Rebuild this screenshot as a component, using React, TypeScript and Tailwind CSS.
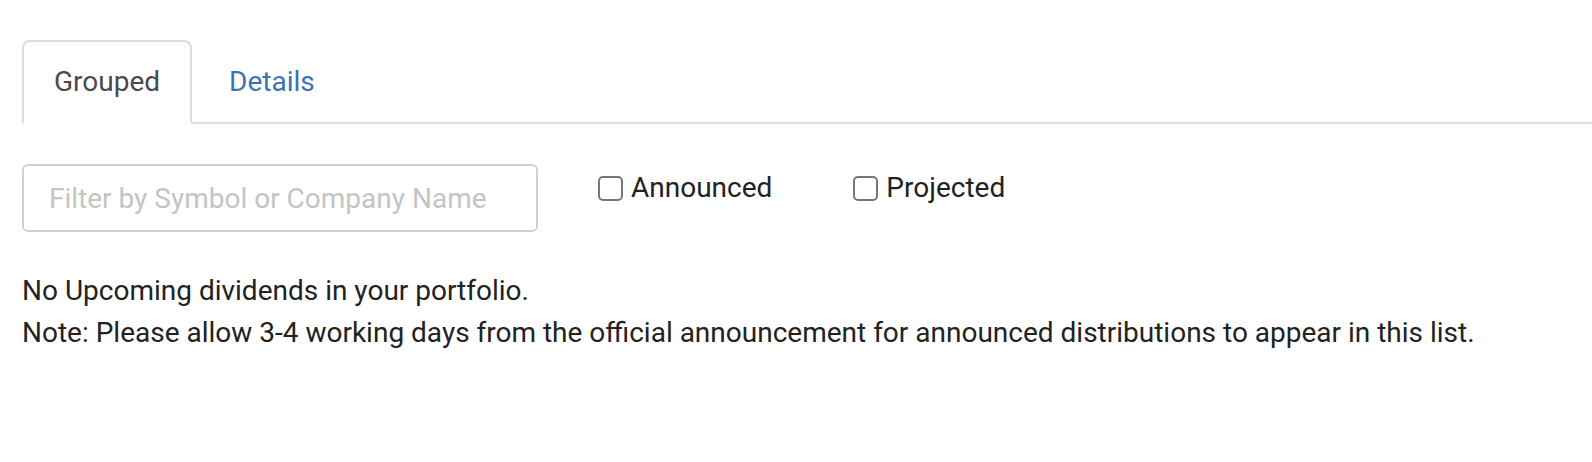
import React, { useState } from 'react';

const tabs = [
  { id: 'grouped', label: 'Grouped' },
  { id: 'details', label: 'Details' },
];

const CheckOption: React.FC<{ label: string; checked: boolean; onChange: () => void; className?: string }> = ({ label, checked, onChange, className }) => (
  <label className={`flex items-center gap-[8px] leading-[42px] text-[#222] cursor-pointer ${className ?? ''}`}>
    <input
      type="checkbox"
      checked={checked}
      onChange={onChange}
      className="appearance-none w-[25px] h-[25px] border-2 border-[#767676] rounded-[5px] bg-white checked:bg-[#0075ff] checked:border-[#0075ff]"
    />
    <span>{label}</span>
  </label>
);

export default function App() {
  const [activeTab, setActiveTab] = useState('grouped');
  const [filter, setFilter] = useState('');
  const [announced, setAnnounced] = useState(false);
  const [projected, setProjected] = useState(false);

  return (
    <div className="min-h-[462px] bg-white pl-[22px] pt-[40px] text-[28px] font-['Roboto',sans-serif]">
      {/* Tabs */}
      <div className="flex border-b-2 border-[#dddddd]">
        {tabs.map(({ id, label }, i) => (
          <button
            key={id}
            onClick={() => setActiveTab(id)}
            className={`-mb-[2px] border-2 rounded-t-[8px] px-[30px] py-[19px] leading-[42px] ${i > 0 ? 'ml-[5px]' : ''} ${
              activeTab === id
                ? 'border-[#dddddd] border-b-white bg-white text-[#4a4a4a]'
                : 'border-transparent text-[#3b72b8] hover:underline'
            }`}
          >
            {label}
          </button>
        ))}
      </div>

      {/* Filters */}
      <div className="flex items-start mt-[40px]">
        <input
          type="text"
          value={filter}
          onChange={(e) => setFilter(e.target.value)}
          placeholder="Filter by Symbol or Company Name"
          className="w-[516px] h-[68px] border-2 border-[#d0d0d0] rounded-[6px] px-[25px] text-[#222] placeholder:text-[#c4c4c4] outline-none"
        />
        <CheckOption label="Announced" checked={announced} onChange={() => setAnnounced(!announced)} className="ml-[60px] mt-[3px]" />
        <CheckOption label="Projected" checked={projected} onChange={() => setProjected(!projected)} className="ml-[81px] mt-[3px]" />
      </div>

      {/* Message */}
      <div className="mt-[38px] leading-[42px] text-[#222]">
        <p>No Upcoming dividends in your portfolio.</p>
        <p>Note: Please allow 3-4 working days from the official announcement for announced distributions to appear in this list.</p>
      </div>
    </div>
  );
}
